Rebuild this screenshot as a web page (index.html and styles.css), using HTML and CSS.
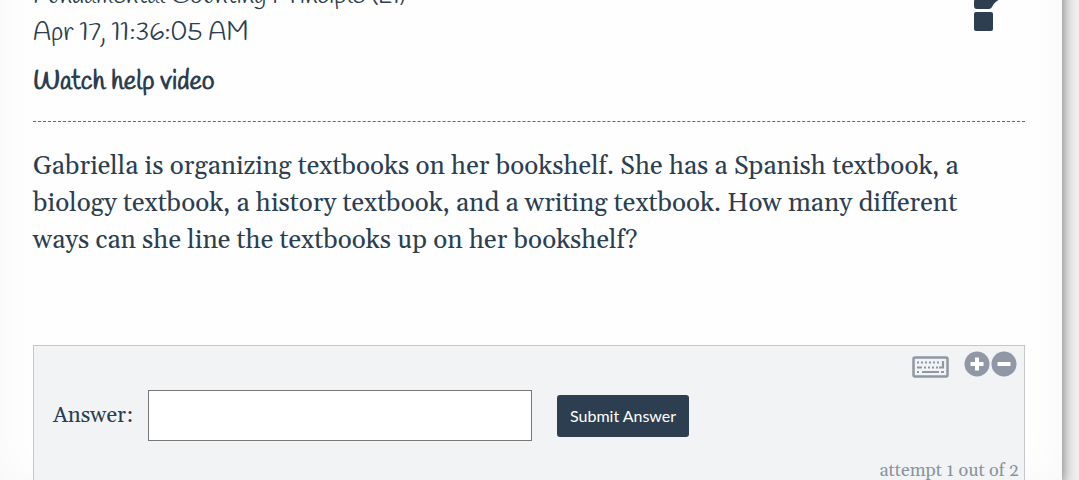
FILE: index.html
```html
<!DOCTYPE html>
<html lang="en">
<head>
    <meta charset="UTF-8">
    <meta name="viewport" content="width=device-width, initial-scale=1.0">
    <title>Fundamental Counting Principle</title>
    <link rel="stylesheet" href="styles.css">
</head>
<body>
    <main class="paper">
        <header class="header">
            <div class="header-text">
                <h1 class="title">Fundamental Counting Principle (L1)</h1>
                <p class="date">Apr 17, 11:36:05 AM</p>
                <a class="help-link" href="#help">Watch help video</a>
            </div>
            <svg class="hint-icon" width="40" height="64" viewBox="0 0 40 64" aria-hidden="true">
                <path d="M0 13C4 4 10 0 19 0c11 0 20 7 20 17 0 9-5 13-11 17-3 2-4 4-5 6q-1 2-3 2H8q-3 0-3-3v-3c0-8 5-12 10-15 4-2 6-4 6-6 0-4-5-5-8-2l-4 5z"/>
                <rect x="5" y="45" width="19" height="19" rx="2"/>
            </svg>
        </header>

        <p class="question">Gabriella is organizing textbooks on her bookshelf. She has a Spanish textbook, a biology textbook, a history textbook, and a writing textbook. How many different ways can she line the textbooks up on her bookshelf?</p>

        <form class="answer-box">
            <div class="tools">
                <button type="button" class="tool-btn keyboard-btn" aria-label="Keyboard">
                    <svg width="38" height="22" viewBox="0 0 38 22">
                        <rect x="1.5" y="1.5" width="34" height="19" rx="1.5" fill="none" stroke="#8f98a4" stroke-width="2.5"/>
                        <path d="M5 6.5h2M9 6.5h2M13 6.5h2M17 6.5h2M21 6.5h2M25 6.5h2M5 11.5h5M12 11.5h2M16 11.5h2M20 11.5h2M24 11.5h2M5 16h2M10 16h17M29 16h3M27 11.5h4V5" fill="none" stroke="#8f98a4" stroke-width="2.2"/>
                    </svg>
                </button>
                <button type="button" class="tool-btn" aria-label="Zoom in">
                    <svg width="26" height="26" viewBox="0 0 26 26">
                        <circle cx="13" cy="13" r="12.5"/>
                        <path d="M13 6.5v13M6.5 13h13" stroke="#fff" stroke-width="4"/>
                    </svg>
                </button>
                <button type="button" class="tool-btn" aria-label="Zoom out">
                    <svg width="26" height="26" viewBox="0 0 26 26">
                        <circle cx="13" cy="13" r="12.5"/>
                        <path d="M6.5 13h13" stroke="#fff" stroke-width="4"/>
                    </svg>
                </button>
            </div>
            <div class="answer-row">
                <label for="answer" class="answer-label">Answer:</label>
                <input type="text" id="answer" class="answer-input" autocomplete="off">
                <button type="submit" class="submit-btn">Submit Answer</button>
            </div>
            <p class="attempts">attempt 1 out of 2</p>
        </form>
    </main>
</body>
</html>
```

FILE: styles.css
```css
* {
    margin: 0;
    padding: 0;
    box-sizing: border-box;
}

body {
    background-color: #efefef;
    color: #2c3e50;
    font-family: Georgia, Gelasio, 'Liberation Serif', serif;
    overflow: hidden;
}

/* the sheet starts above the window, as if scrolled down */
.paper {
    margin: -46px 17px 0 0;
    padding: 24px 37px 0 33px;
    background-color: #fefefe;
    box-shadow: 1px 0 12px rgba(0, 0, 0, 0.5), inset 0 0 40px rgba(0, 0, 0, 0.03);
}

.header {
    display: flex;
    justify-content: space-between;
    align-items: flex-start;
    padding-bottom: 20px;
    border-bottom: 1px dashed #666;
}

.header-text {
    font-family: Handlee, Lato, sans-serif;
}

.title,
.date {
    font-size: 26px;
    font-weight: 300;
    line-height: 37px;
}

.help-link {
    display: block;
    margin-top: 12px;
    color: #2c3e50;
    font-size: 26px;
    font-weight: 700;
    line-height: 37px;
    text-decoration: none;
}

.hint-icon {
    margin: -11px 16px 0 0;
    fill: #2c3e50;
}

.question {
    margin-top: 26px;
    padding-right: 16px;
    font-size: 26px;
    line-height: 37px;
}

.answer-box {
    margin-top: 86px;
    background-color: #f1f3f5;
    border: 1px solid #c4c8cc;
}

.tools {
    display: flex;
    justify-content: flex-end;
    gap: 1px;
    padding: 5px 7px 0;
}

.tool-btn {
    height: 26px;
    border: none;
    background: none;
    cursor: pointer;
}

.tool-btn svg {
    display: block;
    fill: #8f98a4;
}

.keyboard-btn {
    padding-top: 5px;
    margin-right: 13px;
}

.answer-row {
    display: flex;
    align-items: center;
    padding: 13px 19px 0;
}

.answer-label {
    width: 95px;
    font-size: 22px;
}

.answer-input {
    width: 384px;
    height: 51px;
    padding: 0 12px;
    border: 1px solid #777;
    background-color: #fff;
    color: #2c3e50;
    font: inherit;
    font-size: 22px;
}

.submit-btn {
    height: 42px;
    margin-left: 25px;
    padding: 0 13px;
    border: none;
    border-radius: 3px;
    background-color: #2c3e50;
    color: #fff;
    font-family: Lato, sans-serif;
    font-size: 16px;
    cursor: pointer;
}

.attempts {
    margin-top: 18px;
    padding-right: 5px;
    color: #8a939c;
    font-size: 18px;
    line-height: 24px;
    text-align: right;
}
```
